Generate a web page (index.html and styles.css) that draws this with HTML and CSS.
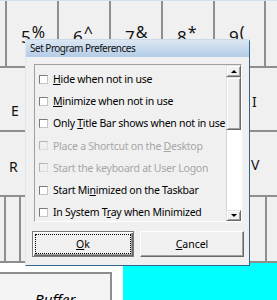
FILE: index.html
```html
<!DOCTYPE html>
<html lang="en">
<head>
  <meta charset="UTF-8">
  <title>Set Program Preferences</title>
  <link rel="stylesheet" href="styles.css">
</head>
<body>
  <div class="screen">
    <div class="keyboard">
      <div class="topband"></div>
      <div class="row row1">
        <div class="key pad5"></div>
        <div class="key num w52"><span class="digit">5</span><span class="sym">%</span></div>
        <div class="key num w52"><span class="digit">6</span><span class="sym">^</span></div>
        <div class="key num w52"><span class="digit">7</span><span class="sym">&amp;</span></div>
        <div class="key num w52"><span class="digit">8</span><span class="sym">*</span></div>
        <div class="key num w51"><span class="digit">9</span><span class="sym">(</span></div>
        <div class="key fill"></div>
      </div>
      <div class="row row2">
        <div class="key letter key-e">E</div>
        <div class="key fill"></div>
        <div class="key letter key-i">I</div>
      </div>
      <div class="row row3">
        <div class="key letter key-r">R</div>
        <div class="key fill"></div>
        <div class="key letter key-v">V</div>
      </div>
      <div class="row row4">
        <div class="key pad4"></div>
        <div class="key w15"></div>
        <div class="key fill"></div>
        <div class="key w12"></div>
      </div>
      <div class="bottom">
        <div class="buffer-wrap">
          <div class="buffer">Buffer</div>
        </div>
        <div class="cyan"></div>
      </div>
    </div>

    <div class="dialog">
      <div class="titlebar">Set Program Preferences</div>
      <div class="listbox">
        <div class="items">
          <div class="item"><span class="box"></span><span><u>H</u>ide when not in use</span></div>
          <div class="item"><span class="box"></span><span><u>M</u>inimize when not in use</span></div>
          <div class="item"><span class="box"></span><span>Only <u>T</u>itle Bar shows when not in use</span></div>
          <div class="item disabled"><span class="box"></span><span>Place a Shortcut on the <u>D</u>esktop</span></div>
          <div class="item disabled"><span class="box"></span><span>Start the keyboard at User Lo<u>g</u>on</span></div>
          <div class="item"><span class="box"></span><span>Start Mi<u>n</u>imized on the Taskbar</span></div>
          <div class="item"><span class="box"></span><span>In System T<u>r</u>ay when Minimized</span></div>
        </div>
        <div class="scrollbar">
          <div class="sb-btn sb-up"><span class="arrow-up"></span></div>
          <div class="sb-thumb"></div>
          <div class="sb-track"></div>
          <div class="sb-btn sb-down"><span class="arrow-down"></span></div>
        </div>
      </div>
      <div class="buttons">
        <button class="btn btn-ok"><span class="focus"><u>O</u>k</span></button>
        <button class="btn btn-cancel"><u>C</u>ancel</button>
      </div>
    </div>
  </div>
</body>
</html>
```

FILE: styles.css
```css
body {
  margin: 0;
  font-family: "Noto Sans", sans-serif;
}

.screen {
  width: 277px;
  height: 300px;
  position: relative;
  overflow: hidden;
  background-color: #f0f0f0;
}

/* teclado de fundo */
.topband {
  height: 1px;
  background-color: #d3e0ec;
}

.row {
  display: flex;
  box-sizing: border-box;
  border-bottom: 2px solid #8e8e8e;
}

.row1 { height: 67px; }
.row2 { height: 64px; }
.row3 { height: 65px; }
.row4 { height: 66px; }

.key {
  box-sizing: border-box;
  border-left: 2px solid #8e8e8e;
  height: 100%;
  color: #111;
}

.pad5 { width: 5px; border-left: none; }
.pad4 { width: 4px; border-left: none; }
.w52 { width: 52px; }
.w51 { width: 51px; }
.w15 { width: 15px; }
.w12 { width: 12px; }
.fill { flex: 1; }

.num {
  display: flex;
  align-items: flex-start;
  padding: 17px 0 0 14px;
}

.digit {
  font-size: 17px;
  margin-top: 7px;
}

.sym {
  font-size: 16px;
  margin-top: 3px;
  margin-left: 1px;
}

.letter {
  font-size: 14px;
}

.key-e { width: 120px; border-left: none; padding: 33px 0 0 11px; }
.key-i { width: 27px; border-left: none; padding: 24px 0 0 2px; }
.key-r { width: 120px; border-left: none; padding: 25px 0 0 9px; }
.key-v { width: 27px; border-left: none; padding: 23px 0 0 1px; }

.bottom {
  display: flex;
  height: 37px;
}

.buffer-wrap {
  width: 123px;
  background-color: #fff;
  padding-top: 9px;
  box-sizing: border-box;
}

.buffer {
  width: 112px;
  height: 100%;
  box-sizing: border-box;
  border-top: 2px solid #8e8e8e;
  border-right: 2px solid #8e8e8e;
  background-color: #f4f4f4;
  text-align: center;
  font-style: italic;
  font-size: 15px;
  padding-top: 15px;
}

.cyan {
  flex: 1;
  background-color: #00ffff;
}

/* janela de dialogo */
.dialog {
  position: absolute;
  left: 25px;
  top: 39px;
  width: 225px;
  height: 227px;
  box-sizing: border-box;
  border: 1px solid;
  border-color: #c9d9e8 #2f6690 #2f6690 #dfe6ec;
  border-top-right-radius: 3px;
  background-color: #f0f0f0;
  display: flex;
  flex-direction: column;
}

.titlebar {
  height: 17px;
  line-height: 16px;
  padding-left: 4px;
  font-size: 10px;
  letter-spacing: -0.5px;
  color: #111;
  background: linear-gradient(to bottom, #dbe7f3, #b3cce6);
}

.listbox {
  margin: 7px 7px 0 8px;
  height: 158px;
  box-sizing: border-box;
  border: 1px solid;
  border-color: #a0a0a0 #fff #fff #a0a0a0;
  display: flex;
  overflow: hidden;
}

.items {
  flex: 1;
  min-width: 0;
  overflow: hidden;
  padding-top: 3px;
}

.item {
  display: flex;
  align-items: center;
  height: 22.2px;
  padding-left: 4px;
  font-size: 10.5px;
  letter-spacing: -0.25px;
  color: #000;
  white-space: nowrap;
}

.box {
  flex-shrink: 0;
  width: 9px;
  height: 9px;
  box-sizing: border-box;
  border: 1px solid;
  border-color: #7a7a7a #c4c4c4 #c4c4c4 #7a7a7a;
  background-color: #fff;
  margin-right: 5px;
}

.disabled {
  color: #a6a6a6;
}

.disabled .box {
  background-color: #f0f0f0;
  border-color: #b4b4b4 #dcdcdc #dcdcdc #b4b4b4;
}

.scrollbar {
  flex-shrink: 0;
  width: 15px;
  display: flex;
  flex-direction: column;
}

.sb-btn,
.sb-thumb {
  box-sizing: border-box;
  background-color: #f0f0f0;
  border: 1px solid;
  border-color: #e3e3e3 #696969 #696969 #e3e3e3;
  box-shadow: inset 1px 1px #fff, inset -1px -1px #a0a0a0;
  display: flex;
  align-items: center;
  justify-content: center;
}

.sb-up { height: 12px; }
.sb-down { height: 11px; }
.sb-thumb { height: 53px; }

.sb-track {
  flex: 1;
  background-color: #fff;
  border-left: 1px solid #d4d4d4;
}

.arrow-up {
  width: 0;
  height: 0;
  border-left: 3px solid transparent;
  border-right: 3px solid transparent;
  border-bottom: 3px solid #000;
}

.arrow-down {
  width: 0;
  height: 0;
  border-left: 3px solid transparent;
  border-right: 3px solid transparent;
  border-top: 3px solid #000;
}

.buttons {
  display: flex;
  gap: 6px;
  margin: 9px 0 0 6px;
}

.btn {
  height: 26px;
  padding: 0;
  box-sizing: border-box;
  font-family: "Noto Sans", sans-serif;
  font-size: 10.5px;
  color: #000;
  background-color: #f0f0f0;
  border: 1px solid;
  border-color: #fff #696969 #696969 #fff;
  box-shadow: inset -1px -1px #a0a0a0;
}

.btn-ok {
  width: 102px;
  border-color: #7a7a7a;
  box-shadow: inset 1px 1px #fff, inset -1px -1px #696969, inset -2px -2px #a0a0a0;
  padding: 2px;
}

.btn-ok .focus {
  display: flex;
  align-items: center;
  justify-content: center;
  height: 100%;
  box-sizing: border-box;
  border: 1px dotted #000;
}

.btn-cancel {
  width: 104px;
}
```
